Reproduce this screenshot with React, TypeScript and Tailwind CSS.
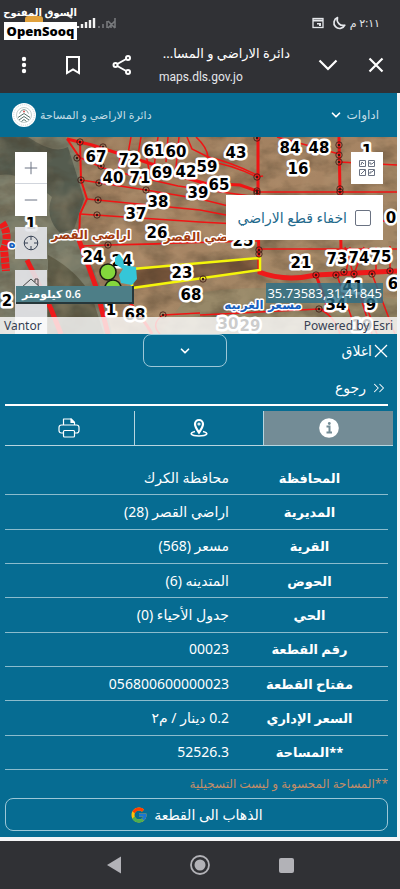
import { useState } from 'react';
import { FcGoogle } from 'react-icons/fc';
import { ChevronDown, ChevronsRight, Minus, Plus } from 'lucide-react';

const parcelInfo = [
  { label: 'المحافظة', value: 'محافظة الكرك' },
  { label: 'المديرية', value: 'اراضي القصر (28)' },
  { label: 'القرية', value: 'مسعر (568)' },
  { label: 'الحوض', value: 'المتدينه (6)' },
  { label: 'الحي', value: 'جدول الأحياء (0)' },
  { label: 'رقم القطعة', value: '00023' },
  { label: 'مفتاح القطعة', value: '056800600000023' },
  { label: 'السعر الإداري', value: '0.2 دينار / م٢' },
  { label: '**المساحة', value: '52526.3' },
];

// [text, x, y] in map coordinates
const parcelLabels: [string, number, number][] = [
  ['67', 96, 25], ['72', 129, 28], ['61', 154, 19], ['60', 176, 20], ['69', 162, 41],
  ['42', 186, 40], ['59', 207, 35], ['40', 113, 46], ['71', 140, 46], ['39', 198, 61],
  ['65', 219, 53], ['43', 236, 21], ['84', 290, 16], ['48', 319, 16], ['16', 298, 37],
  ['1', 367, 19], ['38', 158, 70], ['37', 136, 82], ['26', 157, 101], ['24', 93, 125],
  ['24', 122, 129], ['23', 182, 141], ['68', 191, 163], ['1', 111, 178], ['68', 135, 183],
  ['21', 301, 131], ['73', 337, 127], ['74', 359, 126], ['75', 381, 125], ['41', 353, 155],
  ['34', 336, 173], ['9', 371, 173], ['6', 393, 152], ['2', 7, 169], ['30', 228, 192],
  ['29', 250, 194], ['19', 362, 194], ['0', 391, 86], ['1', 31, 92], ['25', 243, 109],
];

const vertices: [number, number][] = [
  [80, 5], [103, 10], [77, 21], [81, 43], [99, 46], [101, 29], [146, 53], [98, 63], [97, 78],
  [108, 108], [257, 1], [257, 40], [257, 54], [257, 56], [339, 8], [339, 18], [339, 25], [340, 52],
  [340, 55], [259, 113], [259, 117], [203, 142], [316, 138], [336, 138], [344, 135], [354, 137],
  [372, 137], [390, 134], [319, 172], [163, 178],
];

function MapCanvas() {
  return (
    <svg viewBox="0 0 397 197" preserveAspectRatio="xMidYMid slice" className="block h-full w-full" aria-hidden="true">
      <defs>
        <linearGradient id="soil" x1="0" y1="0" x2="1" y2="1">
          <stop offset="0" stopColor="#98795a" />
          <stop offset="0.5" stopColor="#a78564" />
          <stop offset="1" stopColor="#9c8766" />
        </linearGradient>
        <filter id="grain" x="0" y="0" width="100%" height="100%" colorInterpolationFilters="sRGB">
          <feTurbulence type="fractalNoise" baseFrequency="0.035 0.06" numOctaves="4" seed="8" />
          <feColorMatrix values="0 0 0 0 0.28  0 0 0 0 0.23  0 0 0 0 0.16  1.8 0 0 0 -0.7" />
        </filter>
        <filter id="light" x="0" y="0" width="100%" height="100%" colorInterpolationFilters="sRGB">
          <feTurbulence type="fractalNoise" baseFrequency="0.04" numOctaves="3" seed="21" />
          <feColorMatrix values="0 0 0 0 0.78  0 0 0 0 0.68  0 0 0 0 0.54  1.6 0 0 0 -0.7" />
        </filter>
      </defs>
      <rect width="397" height="197" fill="url(#soil)" />
      <path d="M0 0H66L78 22L80 44L85 62L79 80V104L92 128L104 160L112 197H0Z" fill="#7a7c69" />
      <path d="M28 0Q54 18 68 10L78 42L84 62L74 92L60 96Q44 80 52 60Q20 34 0 38V0Z" fill="#4c5448" opacity="0.8" />
      <path d="M48 118Q78 134 92 160L104 197H48Z" fill="#55523f" opacity="0.8" />
      <path d="M130 133L260 121V133L134 150Z" fill="#7b573c" />
      <path d="M188 158Q260 142 397 162V197H160Z" fill="#92896a" opacity="0.7" />
      <rect width="397" height="197" filter="url(#grain)" opacity="0.55" />
      <rect width="397" height="197" filter="url(#light)" opacity="0.4" />

      <g fill="none" stroke="#f01414" strokeWidth="1.5">
        <path d="M67 2L80 21M80 4L81 43L87 62L80 77L79 103" strokeWidth="2" />
        <path d="M81 43L146 53L200 62L257 76M87 62L200 73L257 84M80 77L200 85L257 88" />
        <path d="M81 21L103 31L130 38L178 49L257 60" />
        <path d="M81 109L108 108L257 104M108 108L160 107M163 178L200 176M200 178L319 172L335 174" />
        <path d="M131 0L127 22M141 0L137 24M158 0L154 30M168 0L166 25M179 0L175 40M187 0L192 12L210 21" />
        <path d="M145 12L150 38M120 20L118 43M196 0Q207 10 208 20Q228 24 257 38" />
        <path d="M210 25Q230 27 257 40L263 39M277 0L339 17M257 55H397M339 25L397 28M340 84H397M259 112H397" />
        <path d="M345 110L372 197M337 138L357 197M354 138L377 197M372 137L395 197M350 110L346 137M364 110L354 137M376 110V137M390 109V134" />
        <path d="M319 172Q334 178 340 197M163 178Q150 187 160 197" />
      </g>
      <g fill="none" stroke="#f01414" strokeWidth="3">
        <path d="M67 2L92 8L117 16L155 28L175 38L204 46" />
        <path d="M258 0L258 55L259 137M339 0L340 55L341 112" />
        <path d="M200 46L240 48L257 54M316 138L330 176" />
      </g>
      <g fill="none" stroke="#ee1a1a" strokeWidth="5">
        <path d="M79 103L88 128L96 150L108 197M27 123Q38 145 51 172L61 197" />
        <path d="M2 86Q10 98 4 112L6 134" strokeWidth="8" strokeDasharray="5 1" />
        <path d="M259 135Q285 145 316 138L397 134" />
        <path d="M120 154Q144 182 152 197" strokeWidth="3" />
      </g>
      <path d="M132 132L260 121V133L132 151Z" fill="none" stroke="#f4f50b" strokeWidth="2.5" />
      {vertices.map(([x, y]) => (
        <g key={`${x}-${y}`}>
          <circle cx={x} cy={y} r="3.2" fill="none" stroke="#3b1510" strokeWidth="0.8" />
          <circle cx={x} cy={y} r="1.2" fill="#3b1510" />
        </g>
      ))}
      <g className="font-['DejaVu_Sans',sans-serif] font-bold" textAnchor="middle" stroke="#fff" strokeWidth="5" strokeLinejoin="round" paintOrder="stroke">
        <g fontSize="15" fill="#000">
          {parcelLabels.map(([text, x, y]) => (
            <text key={`${text}-${x}`} x={x} y={y}>{text}</text>
          ))}
        </g>
        <g fontSize="12" strokeWidth="3">
          <text x="91" y="102" fill="#a33a10">اراضي القصر</text>
          <text x="196" y="104" fill="#a33a10">ضي القصر</text>
          <text x="263" y="172" fill="#175fc0">مسعر الغربيه</text>
          <text x="12" y="111" fill="#175fc0">ه</text>
        </g>
      </g>
      <g fill="#84d83c" stroke="#181d12" strokeWidth="1.5">
        <circle cx="113" cy="151" r="8" />
        <circle cx="108" cy="135" r="8" />
      </g>
      <path d="M115 121L119 117L123 122L124 128L136 130L137 142L132 148L121 146L119 138L123 132L115 127Z" fill="#35c6d8" />
    </svg>
  );
}

function DepartmentLogo() {
  return (
    <svg viewBox="0 0 24 24" className="size-6" aria-hidden="true">
      <circle cx="12" cy="12" r="12" fill="#fff" />
      <circle cx="12" cy="12" r="10.3" fill="none" stroke="#c9d2d3" strokeDasharray="1 1" />
      <circle cx="12" cy="12" r="7.5" fill="none" stroke="#a9b9b4" strokeWidth="0.7" />
      <path d="M6 14.5L12 10.5L18 14.5M7 17L12 13.5L17 17M9.5 18.5L12 16.5L14.5 18.5" fill="none" stroke="#55726a" strokeWidth="1" />
      <path d="M7.5 10.5Q9 6.5 12 6.5Q15 6.5 16.5 10.5" fill="none" stroke="#7d9991" strokeWidth="0.9" />
      <circle cx="12" cy="8.5" r="1" fill="#d35450" />
    </svg>
  );
}

function StatusBar() {
  return (
    <div className="relative flex h-11 items-center justify-between pt-0.5 pr-5 pl-6">
      <svg viewBox="0 0 94 16" className="h-4 w-[94px]" aria-hidden="true">
        <rect x="1" y="1" width="18" height="14" rx="3" fill="#e0a13c" />
        <path d="M31 3Q40 -4 48 3" fill="none" stroke="#ddd" strokeWidth="2" />
        <path d="M54 13V11M58 13V9M62 13V7M66 13V5M70 13V3" stroke="#f3f3f3" strokeWidth="2.4" />
        <path d="M75 13V11M79 13V9M83 13V6M87 13V9M91 13V3M84 6L91 13M91 6L84 13" stroke="#77797c" strokeWidth="1.6" />
      </svg>
      <div className="flex items-center gap-1 text-gray-200">
        <svg viewBox="0 0 12 12" className="mr-1 size-3" aria-hidden="true">
          <rect x="1" y="1.5" width="10" height="9" fill="none" stroke="currentColor" strokeWidth="1.3" />
          <path d="M1 3.5H11" stroke="currentColor" strokeWidth="2" />
          <path d="M5 6H9V9H7V7.5H5Z" fill="currentColor" />
        </svg>
        <svg viewBox="0 0 14 14" className="size-3.5" aria-hidden="true">
          <path d="M5.5 1.5A5.7 5.7 0 1 0 12.8 9.2A6 6 0 0 1 5.5 1.5Z" fill="none" stroke="currentColor" strokeWidth="1.7" strokeLinejoin="round" />
        </svg>
        <span dir="rtl" className="text-[11px] leading-4">٢:١١ م</span>
      </div>
      <div className="absolute top-0.5 left-1 w-[73px] text-center font-bold text-white">
        <div dir="rtl" className="text-[10px] leading-5 whitespace-nowrap">السوق المفتوح</div>
        <div className="bg-white font-['Open_Sans',sans-serif] text-[13px] leading-[18px] font-extrabold text-black">OpenSooq</div>
      </div>
    </div>
  );
}

function BrowserBar() {
  return (
    <div className="flex h-[49px] items-center px-3 pb-2 text-white">
      <button aria-label="القائمة" className="flex w-6 justify-center">
        <svg viewBox="0 0 6 18" className="h-[18px] w-1.5" fill="currentColor" aria-hidden="true">
          <circle cx="3" cy="3" r="2.2" />
          <circle cx="3" cy="9" r="2.2" />
          <circle cx="3" cy="15" r="2.2" />
        </svg>
      </button>
      <button aria-label="حفظ" className="ml-[25px] flex w-6 justify-center">
        <svg viewBox="0 0 16 20" className="h-5 w-4" fill="none" stroke="currentColor" strokeWidth="2" aria-hidden="true">
          <path d="M2 2H14V18L8 14.5L2 18Z" />
        </svg>
      </button>
      <button aria-label="مشاركة" className="ml-[25px] flex w-6 justify-center">
        <svg viewBox="0 0 20 20" className="size-5" fill="none" stroke="currentColor" strokeWidth="2" aria-hidden="true">
          <circle cx="3.5" cy="10" r="2" />
          <circle cx="16" cy="3" r="2" />
          <circle cx="16" cy="17" r="2" />
          <path d="M5.3 9L14.2 4M5.3 11L14.2 16" />
        </svg>
      </button>
      <div className="ml-[25px] min-w-0 flex-1">
        <div dir="rtl" className="w-[131px] text-[13px] leading-6 whitespace-nowrap">دائرة الاراضي و المسا...</div>
        <div className="font-[Roboto,sans-serif] text-xs leading-6 text-gray-200">maps.dls.gov.jo</div>
      </div>
      <button aria-label="تصغير" className="mr-6 flex w-6 justify-center">
        <svg viewBox="0 0 20 12" className="h-3 w-5" fill="none" stroke="currentColor" strokeWidth="2.2" aria-hidden="true">
          <path d="M1.5 1.5L10 10L18.5 1.5" />
        </svg>
      </button>
      <button aria-label="اغلاق الصفحة" className="flex w-6 justify-center">
        <svg viewBox="0 0 16 16" className="size-4" fill="none" stroke="currentColor" strokeWidth="2.2" aria-hidden="true">
          <path d="M1.5 1.5L14.5 14.5M14.5 1.5L1.5 14.5" />
        </svg>
      </button>
    </div>
  );
}

function MapView() {
  const [hideParcels, setHideParcels] = useState(false);

  return (
    <section dir="ltr" className="relative h-[197px] overflow-hidden">
      <MapCanvas />
      <div className="absolute top-[15px] left-[15px] flex w-8 flex-col text-gray-500">
        <button aria-label="تكبير" className="flex h-8 items-center justify-center border-b border-gray-300 bg-white">
          <Plus size={20} strokeWidth={1.2} />
        </button>
        <button aria-label="تصغير الخريطة" className="flex h-8 items-center justify-center bg-white">
          <Minus size={20} strokeWidth={1.2} />
        </button>
        <button aria-label="موقعي" className="mt-[11px] flex h-8 items-center justify-center bg-gray-200/90 text-gray-700">
          <svg viewBox="0 0 16 16" className="size-4" fill="none" stroke="currentColor" aria-hidden="true">
            <circle cx="8" cy="8" r="6.8" />
            <path d="M8 1V5M8 11V15M1 8H5M11 8H15" />
          </svg>
        </button>
        <button aria-label="الرئيسية" className="mt-[11px] flex h-16 justify-center bg-gray-200/90 pt-2">
          <svg viewBox="0 0 22 18" className="h-[18px] w-[22px]" fill="none" stroke="#444" aria-hidden="true">
            <path d="M1 10L11 1L21 10H18V17H4V10ZM15 4V1H18V7" />
          </svg>
        </button>
      </div>
      <button aria-label="خرائط الاساس" className="absolute top-[15px] right-3.5 flex size-8 items-center justify-center bg-white text-gray-500">
        <svg viewBox="0 0 18 18" className="size-[18px]" fill="none" stroke="currentColor" aria-hidden="true">
          <path d="M1.5 1.5H7.5V7.5H1.5ZM10.5 1.5H16.5V7.5H10.5ZM1.5 10.5H7.5V16.5H1.5ZM10.5 10.5H16.5V16.5H10.5Z" />
          <path d="M3 6L4 3L6 5M12 3V5H14L16 3M3 15L7 11M12 15V13H14L16 11" />
        </svg>
      </button>
      <label dir="rtl" className="absolute top-[58px] right-3.5 flex h-[45px] w-[157px] items-center gap-2 bg-white pr-3 text-sm whitespace-nowrap text-[#23698c]">
        <input
          type="checkbox"
          checked={hideParcels}
          onChange={e => setHideParcels(e.target.checked)}
          className="size-4 shrink-0 appearance-none rounded-xs border border-gray-500 bg-white"
        />
        اخفاء قطع الاراضي
      </label>
      <div dir="rtl" className="absolute top-[149px] left-4 h-[18px] w-[118px] border-r-2 border-b-2 border-[#26373a] bg-[#4d7e87] pl-1.5 text-left text-[11px] leading-4 font-semibold text-white">0.6 كيلومتر</div>
      <div className="absolute top-[146px] right-3.5 bg-[#2b6f88]/80 px-px text-[13px] leading-5 text-white">35.73583,31.41845</div>
      <div className="absolute inset-x-0 bottom-0 flex justify-between bg-white/80 px-1 text-xs leading-[17px] text-gray-700">
        <span>Vantor</span>
        <span>Powered by Esri</span>
      </div>
    </section>
  );
}

const tabs = [
  {
    id: 'info',
    label: 'معلومات',
    icon: (
      <svg viewBox="0 0 20 20" className="size-5" aria-hidden="true">
        <circle cx="10" cy="10" r="9.8" fill="#fff" />
        <circle cx="10.3" cy="5.5" r="1.4" fill="#738c96" />
        <path d="M7.5 8.5H10.5V14.5M7.5 14.5H13" fill="none" stroke="#738c96" strokeWidth="2" />
      </svg>
    ),
  },
  {
    id: 'location',
    label: 'الموقع',
    icon: (
      <svg viewBox="0 0 20 20" className="size-5" fill="none" stroke="#fff" aria-hidden="true">
        <path d="M10 14.5C7.5 11 6 8.8 6 6A4 4 0 0 1 14 6C14 8.8 12.5 11 10 14.5Z" strokeWidth="2.2" />
        <circle cx="10" cy="6" r="1" strokeWidth="1.2" />
        <path d="M6 13.5C-0.5 15 1.5 18 10 18S20.5 15 14 13.5" strokeWidth="1.5" />
      </svg>
    ),
  },
  {
    id: 'print',
    label: 'طباعة',
    icon: (
      <svg viewBox="0 0 22 20" className="h-5 w-[22px]" fill="none" stroke="#fff" strokeWidth="1.2" strokeLinejoin="round" aria-hidden="true">
        <path d="M5.5 7V1H13L16.5 4.5V7" />
        <path d="M13 1V4.5H16.5Z" fill="#fff" />
        <path d="M5.5 15H3.5Q1 15 1 12.5V9.5Q1 7 3.5 7H18.5Q21 7 21 9.5V12.5Q21 15 18.5 15H16.5" />
        <rect x="5.5" y="12.5" width="11" height="6.5" rx="1" />
      </svg>
    ),
  },
];

function ParcelPanel() {
  const [activeTab, setActiveTab] = useState('info');

  return (
    <section className="pr-[9px] pb-1.5 pl-[5px] text-sm text-white">
      <div className="flex h-[38px] items-start">
        <button className="flex h-[33px] flex-1 items-center gap-0.5">
          <svg viewBox="0 0 14 14" className="size-3.5" fill="none" stroke="currentColor" strokeWidth="1.3" aria-hidden="true">
            <path d="M1 1L13 13M13 1L1 13" />
          </svg>
          اغلاق
        </button>
        <button aria-label="طي" className="flex h-[33px] w-[84px] items-center justify-center rounded-lg border border-[#9cc7d7]">
          <ChevronDown size={14} strokeWidth={3} />
        </button>
        <span className="w-[138px]" />
      </div>
      <div className="flex h-[34px] items-center border-b-2 border-white">
        <button className="flex items-center gap-1">
          <ChevronsRight size={18} strokeWidth={1.4} />
          رجوع
        </button>
      </div>
      <div role="tablist" className="mt-[5px] -mr-[5px] flex h-[35px] divide-x divide-[#b7d5df] border-b border-[#b7d5df]">
        {tabs.map(tab => (
          <button
            key={tab.id}
            role="tab"
            aria-label={tab.label}
            aria-selected={activeTab === tab.id}
            onClick={() => setActiveTab(tab.id)}
            className="flex flex-1 items-center justify-center aria-selected:bg-[#738c96]"
          >
            {tab.icon}
          </button>
        ))}
      </div>
      <table className="mt-[15px] h-[309px] w-full border-collapse">
        <tbody>
          {parcelInfo.map(row => (
            <tr key={row.label} className="border-b border-[#8bbccd]">
              <th scope="row" className="w-[41%] p-0 text-center text-[13px] leading-6 font-bold">{row.label}</th>
              <td className="p-0 pr-0.5 text-right leading-6">{row.value}</td>
            </tr>
          ))}
        </tbody>
      </table>
      <p className="py-1 text-xs leading-5 text-[#c48d68]">**المساحة المحسوبة و ليست التسجيلية</p>
      <button className="flex h-[33px] w-full items-center justify-center gap-1.5 rounded-lg border border-[#9cc7d7]">
        الذهاب الى القطعة
        <FcGoogle size={18} />
      </button>
    </section>
  );
}

function NavigationBar() {
  return (
    <nav className="flex h-12 items-center justify-center gap-[62px] bg-[#303135] text-[#b2b2b7]">
      <button aria-label="رجوع للخلف" className="flex w-6 justify-center">
        <svg viewBox="0 0 14 18" className="h-[18px] w-3.5" fill="currentColor" aria-hidden="true">
          <path d="M14 0.5V17.5L0 9Z" />
        </svg>
      </button>
      <button aria-label="الشاشة الرئيسية" className="flex w-6 justify-center">
        <svg viewBox="0 0 20 20" className="size-5" aria-hidden="true">
          <circle cx="10" cy="10" r="9" fill="none" stroke="currentColor" strokeWidth="1.8" />
          <circle cx="10" cy="10" r="5.5" fill="currentColor" />
        </svg>
      </button>
      <button aria-label="التطبيقات الاخيرة" className="flex w-6 justify-center">
        <span className="size-[15px] rounded-xs bg-current" />
      </button>
    </nav>
  );
}

export default function App() {
  return (
    <div className="min-h-screen bg-[#303135] font-['Noto_Sans','DejaVu_Sans',sans-serif]">
      <header className="bg-[#303135]">
        <StatusBar />
        <BrowserBar />
      </header>
      <div className="bg-[#f4f5f7] pr-[3px] pb-1">
        <main dir="rtl" className="bg-[#066c92]">
          <div className="flex h-11 items-center justify-between pr-[18px] pl-3 text-[#c3dce5]">
            <button className="flex items-center gap-1 text-xs">
              اداوات
              <ChevronDown size={14} strokeWidth={3} className="text-white" />
            </button>
            <div className="flex items-center gap-1 text-[11px]">
              دائرة الاراضي و المساحة
              <DepartmentLogo />
            </div>
          </div>
          <MapView />
          <ParcelPanel />
        </main>
      </div>
      <NavigationBar />
    </div>
  );
}
